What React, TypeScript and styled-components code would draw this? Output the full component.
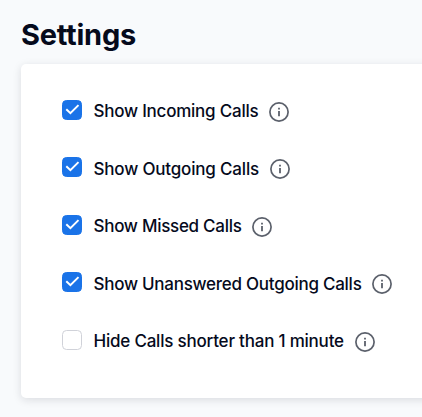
import React, { useState } from "react";
import styled, { createGlobalStyle } from "styled-components";

const GlobalStyle = createGlobalStyle`
  * { box-sizing: border-box; }
  body {
    margin: 0;
    overflow: hidden;
    background: #f8fafc;
    color: #050a1c;
    font-family: Inter, "Liberation Sans", sans-serif;
  }
`;

const Page = styled.main`
  height: 417px;
  padding: 15px 0 0 21px;
  overflow: hidden;
`;

const Title = styled.h1`
  margin: 0 0 9px;
  font-size: 29px;
  font-weight: 650;
  line-height: 40px;
  letter-spacing: -0.25px;
`;

const Card = styled.section`
  display: flex;
  flex-direction: column;
  gap: 33.5px;
  width: 440px;
  height: 334px;
  padding: 35px 41px;
  border-radius: 5px;
  background: #fff;
  box-shadow: 0 2px 8px rgba(20, 25, 40, 0.13);
`;

const Row = styled.div`
  display: flex;
  align-items: flex-start;
  height: 24px;
  flex: none;
`;

const Box = styled.button<{ $checked: boolean }>`
  display: flex;
  flex: none;
  width: 20px;
  height: 20px;
  margin: 0.9px 12px 0 0;
  padding: 0;
  border: 1px solid ${(p) => (p.$checked ? "#1a73e8" : "#d0d2d9")};
  border-radius: 4.5px;
  background: ${(p) => (p.$checked ? "#1a73e8" : "#fff")};
`;

const Label = styled.span<{ $width: number; $spacing: number }>`
  flex: none;
  width: ${(p) => p.$width}px;
  margin-right: 10px;
  font-size: 17px;
  font-weight: 460;
  line-height: 24px;
  text-indent: -0.5px;
  white-space: nowrap;
  letter-spacing: ${(p) => p.$spacing}px;
`;

const InfoSvg = styled.svg`
  flex: none;
  margin-top: 2.9px;
`;

const CheckSvg = styled.svg`
  flex: none;
`;

const Check = () => (
  <CheckSvg width="18" height="18" viewBox="0 0 18 18" fill="none">
    <path d="M3.3 8.3 7.4 12.2 15.5 4.1" stroke="#fff" strokeWidth="2" />
  </CheckSvg>
);

const Info = () => (
  <InfoSvg width="20" height="20" viewBox="0 0 20 20" fill="none">
    <circle cx="10" cy="10" r="9.1" stroke="#5b606b" strokeWidth="1.7" />
    <path d="M10 9v5.2M10 5.8v1.8" stroke="#5b606b" strokeWidth="1.8" />
  </InfoSvg>
);

const options = [
  { label: "Show Incoming Calls", width: 165, spacing: -0.23, checked: true },
  { label: "Show Outgoing Calls", width: 166, spacing: -0.18, checked: true },
  { label: "Show Missed Calls", width: 148, spacing: -0.28, checked: true },
  { label: "Show Unanswered Outgoing Calls", width: 268, spacing: -0.26, checked: true },
  { label: "Hide Calls shorter than 1 minute", width: 251, spacing: -0.21, checked: false },
];

export default function App() {
  const [values, setValues] = useState(options.map((o) => o.checked));
  const toggle = (index: number) =>
    setValues((current) => current.map((v, i) => (i === index ? !v : v)));

  return (
    <Page>
      <GlobalStyle />
      <Title>Settings</Title>
      <Card>
        {options.map((o, i) => (
          <Row key={o.label}>
            <Box
              role="checkbox"
              aria-checked={values[i]}
              aria-label={o.label}
              $checked={values[i]}
              onClick={() => toggle(i)}
            >
              {values[i] && <Check />}
            </Box>
            <Label $width={o.width} $spacing={o.spacing}>{o.label}</Label>
            <Info />
          </Row>
        ))}
      </Card>
    </Page>
  );
}
